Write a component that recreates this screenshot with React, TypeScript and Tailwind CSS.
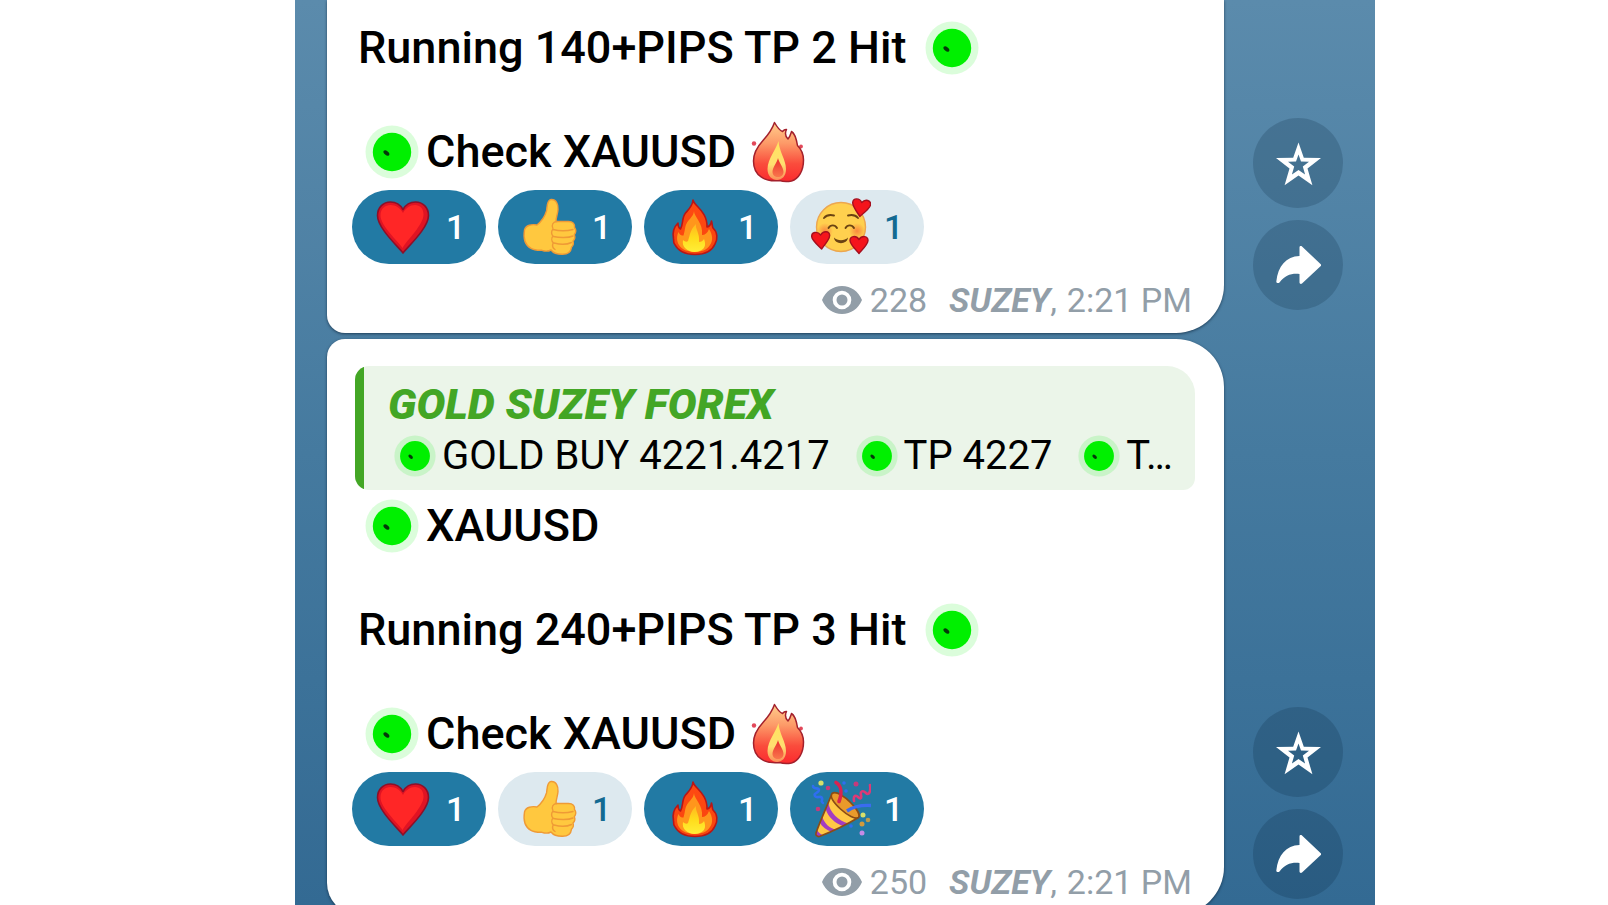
import { useState } from "react";
import type { ReactNode } from "react";

type ReactionData = { id: string; label: string; icon: ReactNode; active: boolean };

function Dot({ small = false }: { small?: boolean }) {
  return (
    <span className={small ? "flex w-[54px] shrink-0 justify-center" : "flex w-[68px] shrink-0 justify-center"}>
      <svg viewBox="0 0 54 54" className={small ? "h-[42px] w-[42px]" : "h-[54px] w-[54px]"} aria-hidden="true">
        <circle cx="27" cy="27" r="26.5" fill="#00f000" fillOpacity="0.14" />
        <circle cx="27" cy="27" r="19.2" fill="#00f000" />
        <ellipse cx="21.400" cy="28" rx="3.400" ry="2" transform="rotate(40 21.400 28)" fill="#04380a" />
      </svg>
    </span>
  );
}

function PaleFire() {
  return (
    <span className="flex w-[62px] shrink-0 justify-center">
      <svg viewBox="0 0 54 62" className="h-[62px] w-[54px]" aria-hidden="true">
        <defs>
          <linearGradient id="paleOuter" x1="0" y1="0" x2="0" y2="1">
            <stop offset="0" stopColor="#ffce8c" />
            <stop offset="0.35" stopColor="#fd9a68" />
            <stop offset="0.7" stopColor="#fa4c3c" />
            <stop offset="1" stopColor="#fb2a2e" />
          </linearGradient>
          <linearGradient id="paleInner" x1="0" y1="0" x2="0" y2="1">
            <stop offset="0" stopColor="#ffe45e" />
            <stop offset="0.6" stopColor="#ffdf70" />
            <stop offset="1" stopColor="#fb8d5a" />
          </linearGradient>
          <linearGradient id="paleCore" x1="0" y1="0" x2="0" y2="1">
            <stop offset="0" stopColor="#ea2f2c" />
            <stop offset="1" stopColor="#f9764c" />
          </linearGradient>
        </defs>
        <circle cx="3" cy="22.500" r="2.200" fill="#e2485a" />
        <circle cx="50" cy="25.500" r="1.900" fill="#e2485a" />
        <path
          d="M23.500 1.500c2 3.500 5 8 8 9 1.200-1.500 2.500-2.200 4-2-1.500 3-1.500 6.500 1.500 9.500 2-2 2.500-4.500 3.500-7.500 3.500 2 5 8 6 14 4 4 6 8.500 6 14.500 0 11-5 19-12 21-5 1-9 .5-12-.5C14 61 2.500 55 2.500 40 2.500 32 6 26 12 19.500c5-5.500 9-10.500 11.500-18z"
          fill="url(#paleOuter)"
          stroke="#a3202c"
          strokeWidth="1.500"
          strokeLinejoin="round"
        />
        <path d="M27.500 20c-2 8-11 18-11 28 0 7 4.500 11 9.500 11s9-4 9-11c0-9-7-18-7.500-28z" fill="url(#paleInner)" />
        <path d="M27 37c-1 5-5.500 9-5.500 14 0 3 2.500 5 5.500 5s5.500-2 5.500-5c0-5-4.500-9-5.500-14z" fill="url(#paleCore)" />
      </svg>
    </span>
  );
}

function Heart() {
  return (
    <svg viewBox="0 0 60 60" className="h-[60px] w-[60px]" aria-hidden="true">
      <path d="M30 56C25 49.500 4.500 31 4.500 18.500 4.500 10 10.500 5 17.500 5 23 5 27.500 8 30 12.500 32.500 8 37 5 42.500 5c7 0 13 5 13 13.500C55.500 31 35 49.500 30 56z" fill="#e01323" stroke="#8c1029" strokeWidth="1.600" strokeLinejoin="round" />
      <path d="M29.500 51C25 44 7.500 29 7.500 18.500 7.500 11.500 12 8 17.500 8 23 8 27.500 11.500 30 16c2.500-4.500 7-8 12-8 5 0 8.500 3.500 8.500 9.500C50.500 28 34 43 29.500 51z" fill="#ff2626" />
    </svg>
  );
}

function Thumb() {
  return (
    <svg viewBox="0 0 60 60" className="h-[60px] w-[60px]" aria-hidden="true">
      <g fill="#ffc83f" stroke="#ef9a36" strokeWidth="1.400" strokeLinejoin="round" strokeLinecap="round">
        <path d="M18 28c5-4 8-9 9.500-14 .8-4 .2-11 4.500-11.500 5-.4 7.500 4.500 7 10C38.700 17 37 20 37 24.500h12.500c4.500 0 6.500 2.500 6 6 1.500 2 1.500 5-.2 7.200 1 2.300.4 4.800-1.300 6.400.7 2 .3 4.500-1.500 6C52 54.500 50 57.500 43 57.300c-5 0-8.500-1-11-4.300-3 1.500-7 1-9 .3-4-.1-8 0-11-2C6 48 4 42 5.500 33c1.200-5 7.500-6 12.500-5z" />
        <path d="M38 24.500c-4 0-6 3.500-4 7.500-2 2-1.800 5.500 0 7-1.700 2-1.500 5 .2 6.700-1 2.300-.5 5.300 1.800 6.800M34 32.500c6 1.500 14 1.500 20 0M34.500 39.500c6 1.500 15 1.500 19.500-.5M35 46c6 1.600 13 1.600 17.500-.5" fill="none" />
      </g>
    </svg>
  );
}

function Fire() {
  return (
    <svg viewBox="0 0 60 60" className="h-[60px] w-[60px]" aria-hidden="true">
      <defs>
        <linearGradient id="fireOuter" x1="0" y1="0" x2="0" y2="1">
          <stop offset="0" stopColor="#ff4a12" />
          <stop offset="1" stopColor="#f8440e" />
        </linearGradient>
        <linearGradient id="fireInner" x1="0" y1="0" x2="0" y2="1">
          <stop offset="0" stopColor="#ffb81f" />
          <stop offset="0.5" stopColor="#ffdc1c" />
          <stop offset="1" stopColor="#ffee38" />
        </linearGradient>
      </defs>
      <path d="M28 3c1 6 14.500 11 14 27 2.500-.5 4-3 4.500-6 1 3 .5 5 1.500 7 4.500 4 5 11 2 16C47 54 41 57.500 30 57.500S13 54 9.500 47C8 45 9 43 8.500 42 7 35 9 30 13 26c0 3 .5 5 2.500 6 3-5 1-11 5-16 4-4.500 7-7 7.500-13z" fill="url(#fireOuter)" stroke="#b81616" strokeWidth="1.600" strokeLinejoin="round" />
      <path d="M29 14c0 6 9.500 12 8 24 3 0 5.500-2 7-6 4 6 4 12 1 16-3 5-9 7-15 7s-13-2-16-7c-2.500-4-2.500-9-.5-13 1 3 3 3.500 5 3.500 2-7 1-10 5-15 2.500-3 5-5 5.500-9.500z" fill="#ff961c" />
      <path d="M31 27c-1 5 4 9 3 18 2 0 4-1 5-3 2 5 1 8-1 10-5 4-13 4-18-1-2-2-2.500-5-2-8 2 2 4 2 5 1 2-6 2-11 8-17z" fill="url(#fireInner)" />
    </svg>
  );
}

const MINI_HEART = "M0 8.500C-2 6-9-.5-9-4.500-9-9-3-10 0-5.500 3-10 9-9 9-4.500 9-.5 2 6 0 8.500z";

function LoveFace() {
  return (
    <svg viewBox="0 0 60 60" className="h-[60px] w-[60px]" aria-hidden="true">
      <defs>
        <radialGradient id="cheek">
          <stop offset="0" stopColor="#f8803c" stopOpacity="0.9" />
          <stop offset="1" stopColor="#f8803c" stopOpacity="0" />
        </radialGradient>
      </defs>
      <circle cx="30" cy="30" r="24.500" fill="#ffd04e" stroke="#eca650" strokeWidth="1.400" />
      <circle cx="14" cy="34" r="8" fill="url(#cheek)" />
      <circle cx="46" cy="34" r="8" fill="url(#cheek)" />
      <g fill="none" stroke="#6b4312" strokeWidth="1.900" strokeLinecap="round">
        <path d="M13 21c2.500-3 6-3.500 10-2.500M37 18.500c4-1 7.500-.5 10 2.500" />
        <path d="M17.500 31c2-3.500 6.500-3.500 8.500 0M34.500 31c2-3.500 6.500-3.500 8.500 0" />
      </g>
      <path d="M23 40.500c3.500 3.500 10.500 3.500 14 0-.6 7.500-13.500 7.500-14 0z" fill="#6b4312" />
      <g fill="#f5141c" stroke="#a50f1e" strokeWidth="1.400" strokeLinejoin="round">
        <path d={MINI_HEART} transform="translate(50 11) rotate(8)" />
        <path d={MINI_HEART} transform="translate(10 43.500) rotate(-4)" />
        <path d={MINI_HEART} transform="translate(48 48)" />
      </g>
    </svg>
  );
}

function Party() {
  return (
    <svg viewBox="0 0 60 60" className="h-[60px] w-[60px]" aria-hidden="true">
      <path d="M21 14.500C17 25 9 42 5 54c-.8 2.500 1.500 4.200 4 3.300C21 52.500 35 46 47.500 38.500z" fill="#ffc845" />
      <path d="M17.300 24c1.500 9 10 18 20.200 20.500l-5 2.700C24 44.500 17 38 14.700 30zM11.300 38c2 6 7 11.500 14 12.800l-4.300 2C15 51 11 47.500 8.800 43.500zM6 51c1.500 2.500 3.500 4.500 6.500 5.300L8 58c-2.500.2-4-1.500-3.300-3.700z" fill="#a43cc0" />
      <path d="M21 14.500c4-3 13 3 19 9.500 6 6 9.500 12 7.500 14.500-3 2-11-2-18-8.500S18.500 18 21 14.500z" fill="#e99a2b" />
      <path d="M21 14.500C17 25 9 42 5 54c-.8 2.500 1.500 4.200 4 3.300C21 52.500 35 46 47.500 38.500M21 14.500c4-3 13 3 19 9.500 6 6 9.500 12 7.500 14.500-3 2-11-2-18-8.500S18.500 18 21 14.500z" fill="none" stroke="#8a4c16" strokeWidth="1.700" strokeLinejoin="round" />
      <path d="M25 3.500c5 3 6.500 10 3 19" fill="none" stroke="#d92350" strokeWidth="3.600" strokeLinecap="round" />
      <path d="M36 32c7-5 15-6 24-5.500" fill="none" stroke="#3a6cf0" strokeWidth="3.400" />
      <path d="M43 22c-1-6 2-6 4-4s4 2 3-2 2-5 5-2 5-2 4-8" fill="none" stroke="#dd3a76" strokeWidth="2.600" strokeLinecap="round" />
      <path d="M2 7c0 4 6 1 6 4s-6 3-4 6 6-1 7 2-2 3 1 5" fill="none" stroke="#2f6ef0" strokeWidth="2.600" strokeLinecap="round" />
      <circle cx="10" cy="4" r="2.600" fill="#d6e06a" />
      <circle cx="17" cy="9" r="2.300" fill="#c43b7c" />
      <circle cx="45" cy="5" r="2.500" fill="#c43b7c" />
      <circle cx="7" cy="30" r="2.300" fill="#c43b7c" />
      <circle cx="33" cy="4" r="1.800" fill="#2f6ef0" />
      <circle cx="35" cy="12" r="1.800" fill="#2f6ef0" />
      <circle cx="40" cy="47" r="1.800" fill="#2f6ef0" />
      <circle cx="52" cy="36" r="2.500" fill="#d6e06a" />
      <circle cx="51" cy="45" r="2.500" fill="#d29a3c" />
      <circle cx="57" cy="41" r="2.300" fill="#b99a4e" />
      <circle cx="51" cy="54" r="2.500" fill="#c58be6" />
    </svg>
  );
}

function Reaction({ label, icon, active }: ReactionData) {
  const [on, setOn] = useState(active);

  return (
    <button
      type="button"
      aria-label={label}
      aria-pressed={on}
      onClick={() => setOn(!on)}
      className={`flex h-[74px] w-[134px] items-center gap-[13px] rounded-full pl-[21px] text-[34px] leading-10 font-medium ${
        on ? "bg-[#227aa4] text-white" : "bg-[#dde9ef] text-[#136a92]"
      }`}
    >
      {icon}
      <span>1</span>
    </button>
  );
}

function Meta({ views }: { views: number }) {
  return (
    <footer className="mt-4 flex items-center justify-end pr-8 text-[34px] leading-10 text-[#929ea8]">
      <svg viewBox="0 0 40 28" className="mr-2 h-7 w-10" aria-hidden="true">
        <path
          fillRule="evenodd"
          d="M20 0c9 0 16.500 5.500 20 14-3.500 8.500-11 14-20 14S3.500 22.500 0 14C3.500 5.500 11 0 20 0zm0 4.700a9.300 9.300 0 1 0 0 18.600 9.300 9.300 0 0 0 0-18.600z"
          fill="#929ea8"
        />
        <circle cx="20" cy="14" r="5.500" fill="#929ea8" />
      </svg>
      <span className="mr-[22px]">{views}</span>
      <span className="mr-[10px]">
        <b className="font-bold italic">SUZEY</b>,
      </span>
      <time>2:21 PM</time>
    </footer>
  );
}

function SideActions() {
  return (
    <>
      <button type="button" aria-label="Save" className="flex size-[90px] items-center justify-center rounded-full bg-[#001c34]/18">
        <svg viewBox="0 0 46 46" className="size-[46px]" aria-hidden="true">
          <path
            fillRule="evenodd"
            d="M23.500 2.500l5.300 15.300 17.200.3-13.500 10.400 4.900 16.700L23.500 35.400 9.600 45.200l4.900-16.700L1 18.100l17.200-.3zm0 12l-2.500 7.100-8 .2 6.200 4.800-2.300 8 6.600-4.600 6.600 4.600-2.300-8 6.200-4.800-8-.2z"
            fill="#fff"
          />
        </svg>
      </button>
      <button type="button" aria-label="Share" className="flex size-[90px] items-center justify-center rounded-full bg-[#001c34]/18">
        <svg viewBox="0 0 46 46" className="size-[46px]" aria-hidden="true">
          <path
            d="M27 4.500L45.500 22c.8.700.8 1.600 0 2.300L27 41.500c-1 .8-2.500.3-2.500-1V32c-8.500-.8-14.500 1.500-20 8.500-1 1-3.300.8-3.200-1C3 24 11 14.500 24.500 14V5.500c0-1.300 1.500-1.800 2.500-1z"
            fill="#fff"
          />
        </svg>
      </button>
    </>
  );
}

function Message({ target, views, reactions, last = false, quote }: {
  target: number;
  views: number;
  reactions: ReactionData[];
  last?: boolean;
  quote?: ReactNode;
}) {
  return (
    <section className="flex items-end gap-[29px] px-8">
      <article
        className={`min-w-0 flex-1 bg-white pb-[13px] shadow-[0_1px_3px_rgba(0,20,40,0.6)] ${
          last
            ? "rounded-tl-[18px] rounded-tr-[48px] rounded-br-[48px] rounded-bl-[32px] pt-[27px]"
            : "rounded-br-[48px] rounded-bl-[18px] pt-[22px]"
        }`}
      >
        {quote}
        <div className="pr-8 pl-[31px] text-[45px] leading-[52px] font-medium text-black">
          {quote && (
            <p className="mb-[52px] flex h-[52px] items-center">
              <Dot />
              XAUUSD
            </p>
          )}
          <p className="flex h-[52px] items-center whitespace-pre">
            {`Running ${target === 2 ? 140 : 240}+PIPS TP ${target} Hit `}
            <Dot />
          </p>
          <p className="mt-[52px] flex h-[52px] items-center whitespace-pre">
            <Dot />
            {"Check XAUUSD "}
            <PaleFire />
          </p>
        </div>
        <div className="mt-3 flex gap-3 pl-[25px]">
          {reactions.map((item) => (
            <Reaction key={item.id} {...item} />
          ))}
        </div>
        <Meta views={views} />
      </article>
      <aside className={last ? "flex flex-col gap-3 pb-4" : "flex flex-col gap-3 pb-[23px]"}>
        <SideActions />
      </aside>
    </section>
  );
}

function Quote() {
  return (
    <blockquote className="mr-[29px] mb-[10px] ml-7 flex overflow-hidden rounded-tl-[14px] rounded-tr-[28px] rounded-br-[12px] rounded-bl-[14px] bg-[#ebf5e9]">
      <div className="w-[9px] shrink-0 bg-[#43a625]" />
      <div className="min-w-0 flex-1 pt-3 pr-6 pb-2 pl-6 leading-[52px]">
        <cite className="block text-[43px] font-black text-[#43a625] italic">GOLD SUZEY FOREX</cite>
        <p className="flex items-center text-[40px] whitespace-pre text-black">
          <Dot small />
          {"GOLD BUY 4221.4217  "}
          <Dot small />
          {"TP 4227  "}
          <Dot small />
          {"T…"}
        </p>
      </div>
    </blockquote>
  );
}

const firstReactions: ReactionData[] = [
  { id: "heart", label: "Heart", icon: <Heart />, active: true },
  { id: "thumb", label: "Thumbs up", icon: <Thumb />, active: true },
  { id: "fire", label: "Fire", icon: <Fire />, active: true },
  { id: "love", label: "In love", icon: <LoveFace />, active: false },
];

const secondReactions: ReactionData[] = [
  { id: "heart", label: "Heart", icon: <Heart />, active: true },
  { id: "thumb", label: "Thumbs up", icon: <Thumb />, active: false },
  { id: "fire", label: "Fire", icon: <Fire />, active: true },
  { id: "party", label: "Party", icon: <Party />, active: true },
];

export default function App() {
  return (
    <div className="h-screen overflow-hidden bg-white pr-[233px] pl-[295px] font-['Roboto',sans-serif]">
      <main className="flex h-full flex-col gap-[6px] bg-linear-to-b from-[#5b8bac] via-[#457a9f] to-[#336a93]">
        <Message target={2} views={228} reactions={firstReactions} />
        <Message target={3} views={250} reactions={secondReactions} last quote={<Quote />} />
      </main>
    </div>
  );
}
